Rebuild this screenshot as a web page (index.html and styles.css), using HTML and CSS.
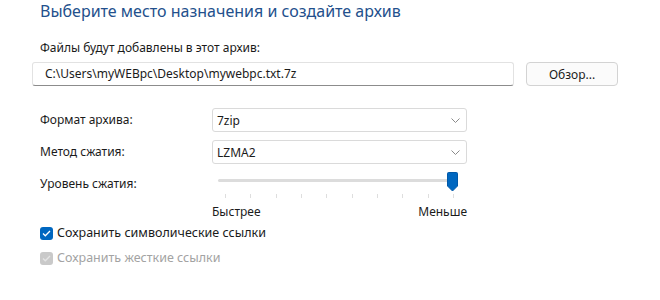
FILE: index.html
```html
<!DOCTYPE html>
<html lang="ru">
<head>
    <meta charset="UTF-8">
    <title>Создание архива</title>
    <link rel="stylesheet" href="styles.css">
</head>
<body>
    <div class="dialog">
        <h1 class="title">Выберите место назначения и создайте архив</h1>

        <div class="field-label">Файлы будут добавлены в этот архив:</div>
        <div class="path-row">
            <div class="path-input">C:\Users\myWEBpc\Desktop\mywebpc.txt.7z</div>
            <button class="btn">Обзор...</button>
        </div>

        <div class="opt-grid">
            <div class="opt-label">Формат архива:</div>
            <div class="select">
                <span>7zip</span>
                <svg class="chevron" width="9" height="5" viewBox="0 0 9 5"><path d="M0.5 0.5 L4.5 4.5 L8.5 0.5" fill="none" stroke="#8a8a8a" stroke-width="1"/></svg>
            </div>

            <div class="opt-label">Метод сжатия:</div>
            <div class="select">
                <span>LZMA2</span>
                <svg class="chevron" width="9" height="5" viewBox="0 0 9 5"><path d="M0.5 0.5 L4.5 4.5 L8.5 0.5" fill="none" stroke="#8a8a8a" stroke-width="1"/></svg>
            </div>

            <div class="opt-label">Уровень сжатия:</div>
            <div class="slider">
                <div class="slider-rail">
                    <div class="track"></div>
                    <svg class="thumb" width="11" height="20" viewBox="0 0 11 20"><path d="M1.5 0.5 H9.5 Q10.5 0.5 10.5 1.5 V14 L5.5 19 L0.5 14 V1.5 Q0.5 0.5 1.5 0.5 Z" fill="#0067c0" stroke="#0058a8" stroke-width="1"/></svg>
                </div>
                <div class="ticks">
                    <i></i><i></i><i></i><i></i><i></i><i></i><i></i><i></i><i></i><i></i>
                </div>
                <div class="scale">
                    <span>Быстрее</span>
                    <span>Меньше</span>
                </div>
            </div>
        </div>

        <div class="checks">
            <label class="check">
                <span class="box on">
                    <svg width="9" height="7" viewBox="0 0 9 7"><path d="M1 3.5 L3.3 5.8 L8 1" fill="none" stroke="#fff" stroke-width="1.3"/></svg>
                </span>
                Сохранить символические ссылки
            </label>
            <label class="check disabled">
                <span class="box off">
                    <svg width="9" height="7" viewBox="0 0 9 7"><path d="M1 3.5 L3.3 5.8 L8 1" fill="none" stroke="#e4e4e4" stroke-width="1.3"/></svg>
                </span>
                Сохранить жесткие ссылки
            </label>
        </div>
    </div>
</body>
</html>
```

FILE: styles.css
```css
:root {
    --text-color: #1b1b1b;
    --title-color: #23508c;
    --accent-color: #0067c0;
    --border-color: #dadada;
    --font-family: 'Noto Sans', 'Open Sans', sans-serif;
}

* {
    margin: 0;
    padding: 0;
    box-sizing: border-box;
}

body {
    font-family: var(--font-family);
    font-size: 12px;
    color: var(--text-color);
    background: #ffffff;
    width: 660px;
    height: 300px;
    overflow: hidden;
}

.dialog {
    padding-left: 32px;
}

.title {
    font-size: 16px;
    font-weight: normal;
    line-height: 22px;
    color: var(--title-color);
    padding-left: 8px;
}

.field-label {
    margin-top: 17px;
    padding-left: 8px;
    line-height: 18px;
}

.path-row {
    display: flex;
    gap: 12px;
    margin-top: 5px;
}

.path-input {
    width: 482px;
    height: 24px;
    line-height: 22px;
    padding-left: 12px;
    border: 1px solid #e2e2e2;
    border-bottom-color: #8c8c8c;
    border-radius: 3px;
}

.btn {
    width: 92px;
    height: 24px;
    font-family: var(--font-family);
    font-size: 12px;
    color: var(--text-color);
    background: #fbfbfb;
    border: 1px solid #d3d3d3;
    border-radius: 4px;
}

.opt-grid {
    display: grid;
    grid-template-columns: 172px 255px;
    row-gap: 8px;
    margin-top: 22px;
    padding-left: 8px;
}

.opt-label {
    line-height: 24px;
}

.select {
    height: 24px;
    display: flex;
    align-items: center;
    justify-content: space-between;
    padding: 0 6px 0 4px;
    border: 1px solid var(--border-color);
    border-radius: 3px;
}

.slider {
    display: flex;
    flex-direction: column;
}

.slider-rail {
    position: relative;
    height: 20px;
}

.track {
    margin: 7px 12px 0 6px;
    height: 3px;
    background: #dcdcdc;
    border-radius: 2px;
}

.thumb {
    position: absolute;
    top: 0;
    right: 9px;
}

.ticks {
    display: flex;
    justify-content: space-between;
    height: 4px;
    margin-top: 2px;
    padding: 0 13px 0 13px;
}

.ticks i {
    width: 1px;
    background: #dedede;
}

.scale {
    display: flex;
    justify-content: space-between;
    margin-top: 6px;
    line-height: 16px;
}

.checks {
    display: flex;
    flex-direction: column;
    gap: 5px;
    margin-top: 3px;
    padding-left: 8px;
    font-size: 12.5px;
}

.check {
    display: flex;
    align-items: center;
    gap: 4px;
    line-height: 20px;
}

.check.disabled {
    color: #a3a3a3;
}

.box {
    width: 13px;
    height: 13px;
    border-radius: 3px;
    display: flex;
    align-items: center;
    justify-content: center;
}

.box.on {
    background: var(--accent-color);
}

.box.off {
    background: #c9c9c9;
}
```
